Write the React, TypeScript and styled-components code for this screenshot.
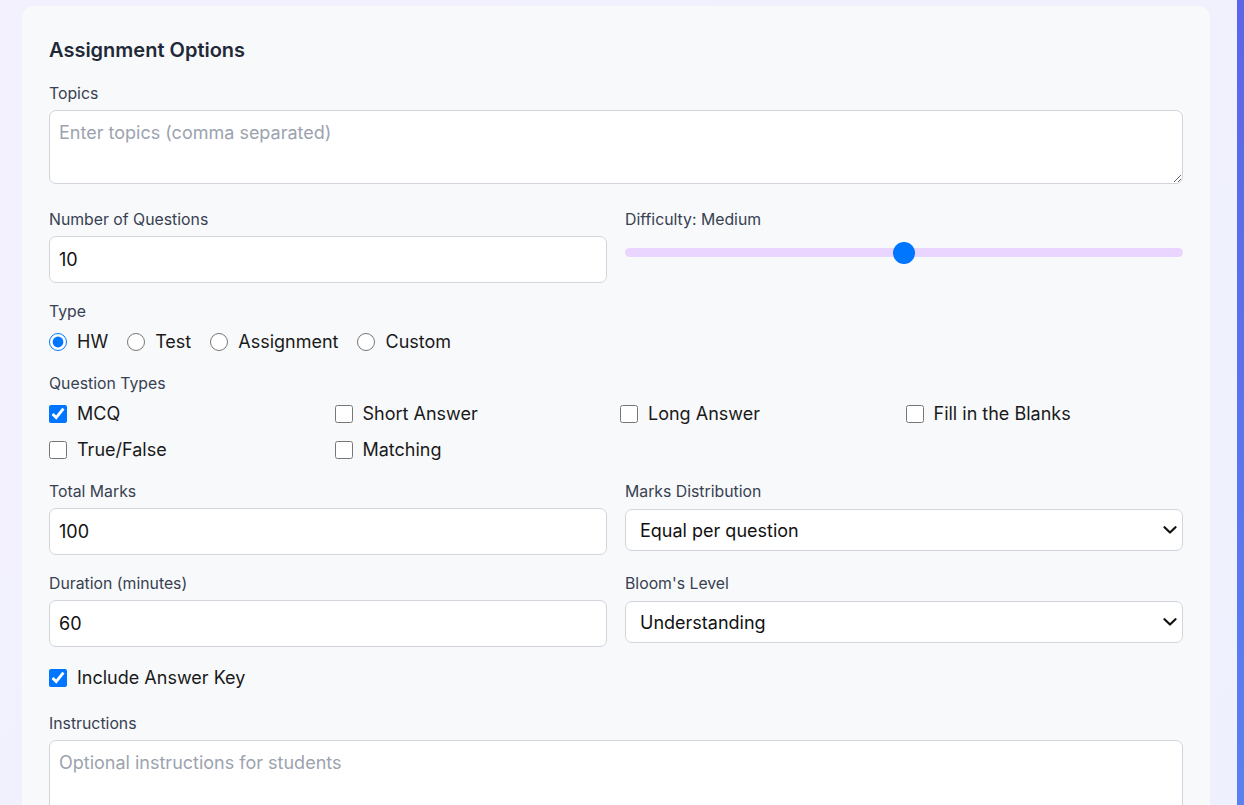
import * as React from "react";
import {useState} from "react";
import styled, {createGlobalStyle} from "styled-components";

const GlobalStyle = createGlobalStyle`
  html, body {
    margin: 0;
    padding: 0;
    height: 100%;
    overflow: hidden;
  }
  body {
    font-family: Inter, "Noto Sans", sans-serif;
    background: linear-gradient(135deg, #f3f1fd 0%, #eef1fd 100%);
  }
`;

const TYPES = ['HW', 'Test', 'Assignment', 'Custom'];
const QUESTION_TYPES = ['MCQ', 'Short Answer', 'Long Answer', 'Fill in the Blanks', 'True/False', 'Matching'];
const LEVELS = ['Easy', 'Medium', 'Hard'];

const Chevron = () => (
  <ChevronIcon width="14" height="8" viewBox="0 0 14 8">
    <polyline points="1.5,1.2 7,6.5 12.5,1.2" fill="none" stroke="#111" strokeWidth="2.2" strokeLinecap="round" strokeLinejoin="round" />
  </ChevronIcon>
);

const App = () => {
  const [type, setType] = useState('HW');
  const [qTypes, setQTypes] = useState<string[]>(['MCQ']);
  const [level, setLevel] = useState(2);
  const [answerKey, setAnswerKey] = useState(true);

  const toggleType = (t: string) => {
    if (qTypes.includes(t)) {
      setQTypes(qTypes.filter((q) => q !== t));
    } else {
      setQTypes([...qTypes, t]);
    }
  };

  return (
    <Page>
      <GlobalStyle />
      <Main>
        <Card>
          <Title>Assignment Options</Title>

          <Group>
            <Label>Topics</Label>
            <TextArea placeholder="Enter topics (comma separated)" />
          </Group>

          <TwoCol>
            <Group>
              <Label>Number of Questions</Label>
              <Input type="number" defaultValue={10} />
            </Group>
            <Group>
              <Label>Difficulty: {LEVELS[level - 1]}</Label>
              <Range
                type="range"
                min={1}
                max={3}
                value={level}
                onChange={(e) => setLevel(Number(e.target.value))}
              />
            </Group>
          </TwoCol>

          <Group>
            <Label>Type</Label>
            <RadioRow>
              {TYPES.map((t) => (
                <Option key={t}>
                  <Radio
                    type="radio"
                    name="type"
                    checked={type === t}
                    onChange={() => setType(t)}
                  />
                  {t}
                </Option>
              ))}
            </RadioRow>
          </Group>

          <Group>
            <Label>Question Types</Label>
            <CheckGrid>
              {QUESTION_TYPES.map((t) => (
                <Option key={t}>
                  <Check
                    type="checkbox"
                    checked={qTypes.includes(t)}
                    onChange={() => toggleType(t)}
                  />
                  {t}
                </Option>
              ))}
            </CheckGrid>
          </Group>

          <TwoCol>
            <Group>
              <Label>Total Marks</Label>
              <Input type="number" defaultValue={100} />
            </Group>
            <Group>
              <Label>Marks Distribution</Label>
              <SelectWrap>
                <Select defaultValue="equal">
                  <option value="equal">Equal per question</option>
                  <option value="custom">Custom</option>
                </Select>
                <Chevron />
              </SelectWrap>
            </Group>
          </TwoCol>

          <TwoCol>
            <Group>
              <Label>Duration (minutes)</Label>
              <Input type="number" defaultValue={60} />
            </Group>
            <Group>
              <Label>Bloom's Level</Label>
              <SelectWrap>
                <Select defaultValue="understanding">
                  <option value="remembering">Remembering</option>
                  <option value="understanding">Understanding</option>
                  <option value="applying">Applying</option>
                </Select>
                <Chevron />
              </SelectWrap>
            </Group>
          </TwoCol>

          <KeyRow>
            <Option>
              <Check
                type="checkbox"
                checked={answerKey}
                onChange={() => setAnswerKey(!answerKey)}
              />
              Include Answer Key
            </Option>
          </KeyRow>

          <Group>
            <Label>Instructions</Label>
            <TextArea placeholder="Optional instructions for students" tall />
          </Group>
        </Card>
      </Main>
      <Strip />
    </Page>
  );
};

const Page = styled.div`
  display: flex;
  height: 805px;
  overflow: hidden;
`
const Main = styled.div`
  flex: 1;
  padding: 6px 27px 0 22px;
`
const Strip = styled.div`
  width: 7px;
  background: linear-gradient(180deg, #5c66e7 0%, #5b80f0 100%);
`
const Card = styled.div`
  background: #f8f9fb;
  border-radius: 12px;
  padding: 28px 27px 40px;
  display: flex;
  flex-direction: column;
  gap: 18px;
`
const Title = styled.h2`
  margin: 0;
  font-size: 20px;
  line-height: 32px;
  font-weight: 600;
  color: #1f2937;
`
const Group = styled.div`
  display: flex;
  flex-direction: column;
`
const Label = styled.label`
  font-size: 15.8px;
  line-height: 20px;
  font-weight: 400;
  color: #374151;
  margin-bottom: 6px;
`
const TextArea = styled.textarea<{tall?: boolean}>`
  box-sizing: border-box;
  width: 100%;
  height: ${(p) => (p.tall ? '90px' : '74px')};
  padding: 9px 9px;
  border: 1px solid #d1d5db;
  border-radius: 7px;
  background: #fff;
  font-family: Inter, sans-serif;
  font-size: 18px;
  line-height: 26px;
  color: #111827;
  margin-bottom: 8px;
  &::placeholder {
    color: #9ca3af;
  }
`
const TwoCol = styled.div`
  display: grid;
  grid-template-columns: 1fr 1fr;
  gap: 18px;
  margin-bottom: 1px;
`
const Input = styled.input`
  box-sizing: border-box;
  height: 47px;
  padding: 0 9px;
  border: 1px solid #d1d5db;
  border-radius: 7px;
  background: #fff;
  font-family: Inter, sans-serif;
  font-size: 18px;
  color: #111;
  appearance: textfield;
  &::-webkit-inner-spin-button,
  &::-webkit-outer-spin-button {
    -webkit-appearance: none;
    margin: 0;
  }
`
const SelectWrap = styled.div`
  position: relative;
  margin-top: 1px;
`
const Select = styled.select`
  box-sizing: border-box;
  width: 100%;
  height: 42px;
  padding: 0 30px 0 14px;
  border: 1px solid #d1d5db;
  border-radius: 7px;
  background: #fff;
  font-family: Inter, sans-serif;
  font-size: 18px;
  color: #111;
  appearance: none;
  -webkit-appearance: none;
`
const ChevronIcon = styled.svg`
  position: absolute;
  right: 6px;
  top: 17px;
  pointer-events: none;
`
const Range = styled.input`
  -webkit-appearance: none;
  appearance: none;
  width: 100%;
  height: 9px;
  margin: 12px 0 0;
  border-radius: 5px;
  background: #e9d5ff;
  outline: none;
  &::-webkit-slider-thumb {
    -webkit-appearance: none;
    width: 22px;
    height: 22px;
    border-radius: 50%;
    background: #0076ff;
    border: none;
  }
`
const RadioRow = styled.div`
  display: flex;
  gap: 19px;
  margin-top: 2px;
  margin-bottom: 2px;
`
const Option = styled.label`
  display: flex;
  align-items: center;
  gap: 10px;
  font-size: 18px;
  line-height: 24px;
  color: #1a1a1a;
`
const Radio = styled.input`
  width: 18px;
  height: 18px;
  margin: 0;
  accent-color: #0075ff;
`
const Check = styled.input`
  width: 18px;
  height: 18px;
  margin: 0;
  accent-color: #0075ff;
`
const CheckGrid = styled.div`
  display: grid;
  grid-template-columns: repeat(4, 1fr);
  column-gap: 8px;
  row-gap: 12px;
  margin-top: 2px;
  margin-bottom: 2px;
`
const KeyRow = styled.div`
  margin-bottom: 6px;
`

export default App;
